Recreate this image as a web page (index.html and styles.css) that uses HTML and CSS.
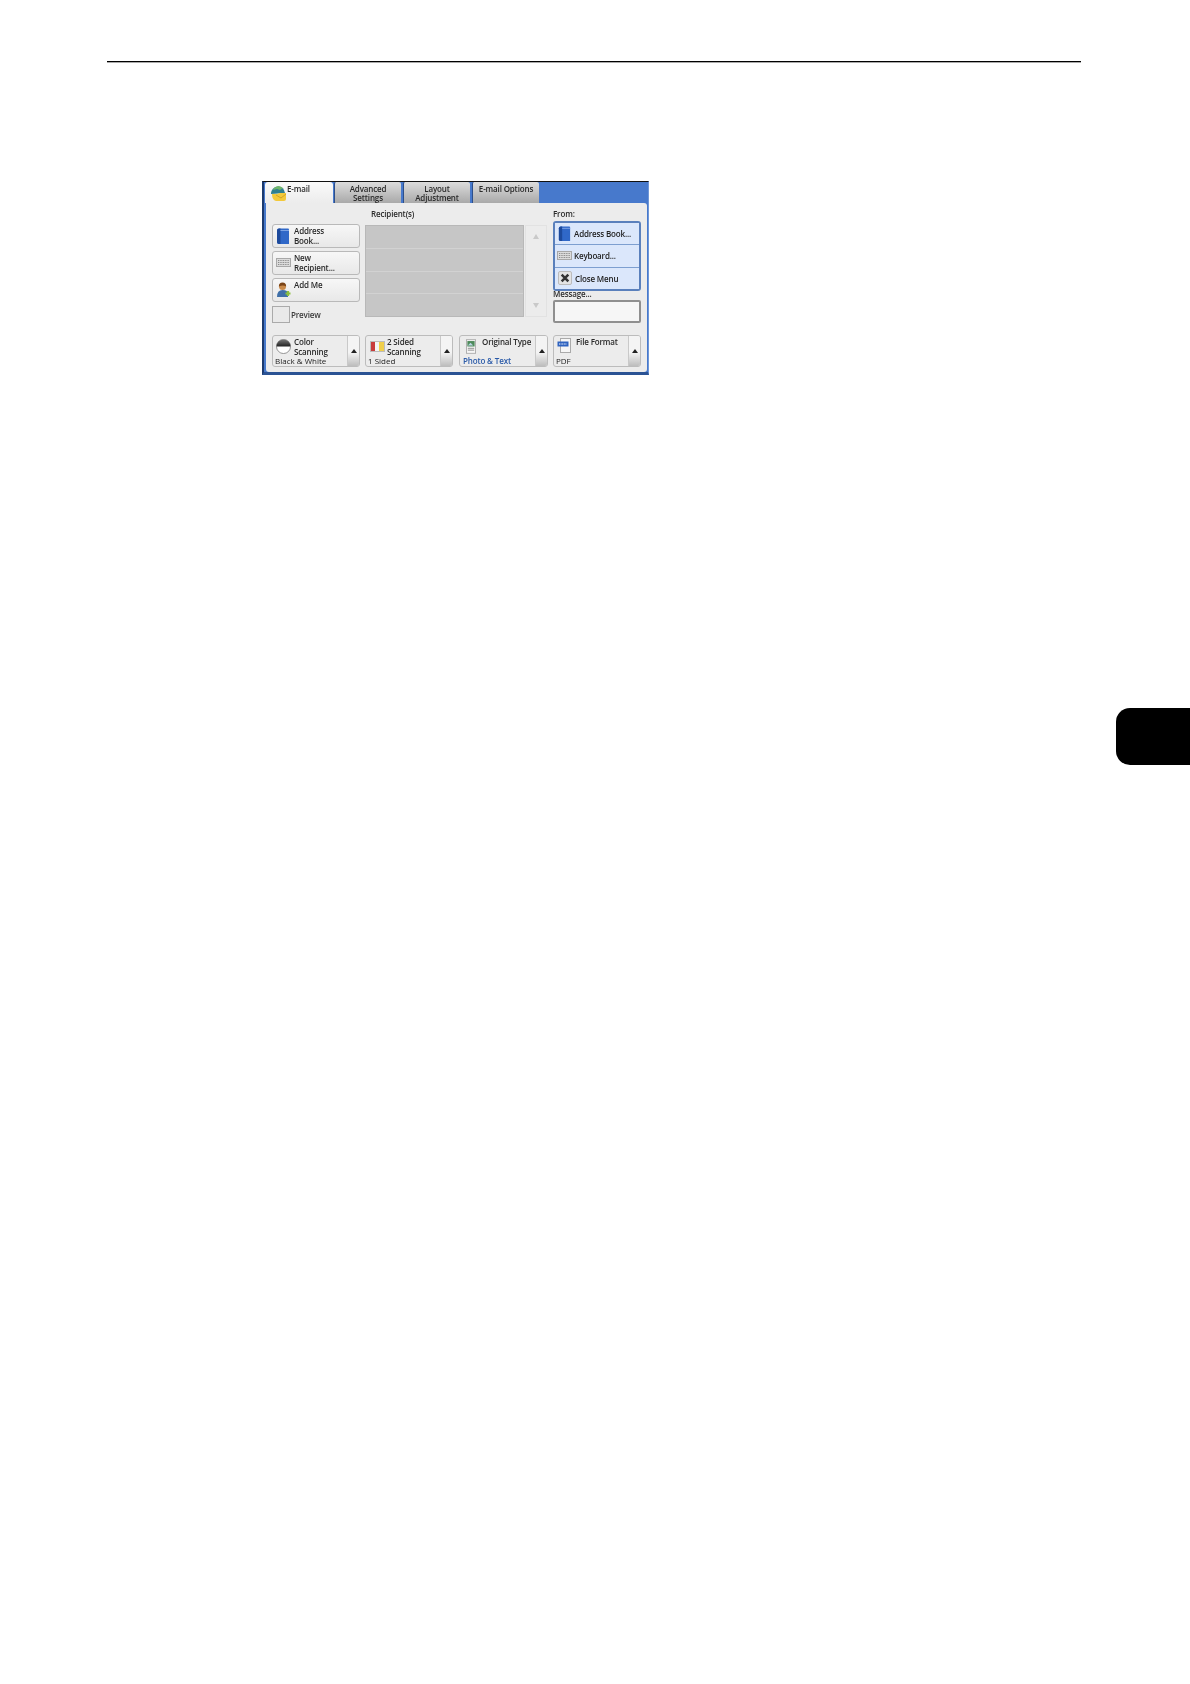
FILE: index.html
```html
<!DOCTYPE html>
<html lang="en">
<head>
<meta charset="utf-8">
<title>E-mail</title>
<link rel="stylesheet" href="styles.css">
</head>
<body>
<div class="rule"></div>
<main class="screen">
  <nav class="tabs">
    <div class="tab tab-active">
      <svg class="tab-icon" viewBox="0 0 15 15"><path d="M0 8a7 7 0 0 1 14-1z" fill="#2f7f8f"/><path d="M2 4a6 6 0 0 1 10-2L9 4 6 3z" fill="#6fb56a"/><path d="M1 8h5l3-1h6v6a2 2 0 0 1-2 2H5Q1 14 1 8z" fill="#f3c93b"/><path d="M5 9l5 3 5-4" fill="none" stroke="#c99a1f" stroke-width=".8"/></svg>
      <span>E-mail</span>
    </div>
    <div class="tab tab-idle">Advanced<br>Settings</div>
    <div class="tab tab-idle">Layout<br>Adjustment</div>
    <div class="tab tab-idle">E-mail Options</div>
  </nav>
  <section class="panel">
    <div class="upper">
      <div class="col-left">
        <button class="btn">
          <svg class="btn-icon" viewBox="0 0 12 16"><path d="M0 2.500Q0 .5 2 .5h9q1 0 1 1V16H2q-2 0-2-2z" fill="#3068c8"/><path d="M0 2.500Q0 .5 2 .5h1.500V16H2q-2 0-2-2z" fill="#1d4a9c"/><path d="M3.500 2.500H12" stroke="#7ea4e4"/></svg>
          <span>Address<br>Book...</span>
        </button>
        <button class="btn">
          <svg class="btn-icon btn-icon-wide" viewBox="0 0 15 9"><rect x=".5" y=".5" width="14" height="8" fill="#dcdcdc" stroke="#a8a8a8"/><path d="M2 2.500h11M2 4.500h11M2 6.500h11" stroke="#8a8a8a" stroke-dasharray="1 .7"/></svg>
          <span>New<br>Recipient...</span>
        </button>
        <button class="btn">
          <svg class="btn-icon btn-icon-person" viewBox="0 0 15 15"><circle cx="6.500" cy="4.500" r="3.500" fill="#c98a4a"/><path d="M2.800 4.500Q3 .5 6.500.5t3.700 4Q7 2.500 2.800 4.500z" fill="#7a4418"/><path d="M1 15q0-7 5.500-7T12 12v3z" fill="#3f6fa8"/><path d="M9.500 11.500h5M12 9v5" stroke="#8cc03f" stroke-width="2.200"/></svg>
          <span>Add Me</span>
        </button>
        <label class="check"><span class="box"></span><span>Preview</span></label>
      </div>
      <div class="col-mid">
        <div class="heading">Recipient(s)</div>
        <div class="list-wrap">
          <div class="list">
            <div class="list-row"></div>
            <div class="list-row"></div>
            <div class="list-row"></div>
            <div class="list-row"></div>
          </div>
          <div class="scroll">
            <div class="scroll-cell"><span class="tri-up"></span></div>
            <div class="scroll-cell scroll-cell-low"><span class="tri-down"></span></div>
          </div>
        </div>
      </div>
      <div class="col-right">
        <div class="from">From:</div>
        <div class="menu">
          <div class="menu-item">
            <svg class="menu-icon" viewBox="0 0 12 16"><path d="M0 2.500Q0 .5 2 .5h9q1 0 1 1V16H2q-2 0-2-2z" fill="#3068c8"/><path d="M0 2.500Q0 .5 2 .5h1.500V16H2q-2 0-2-2z" fill="#1d4a9c"/><path d="M3.500 2.500H12" stroke="#7ea4e4"/></svg>
            <span>Address Book...</span>
          </div>
          <div class="menu-item">
            <svg class="menu-icon menu-icon-wide" viewBox="0 0 15 9"><rect x=".5" y=".5" width="14" height="8" fill="#dcdcdc" stroke="#a8a8a8"/><path d="M2 2.500h11M2 4.500h11M2 6.500h11" stroke="#8a8a8a" stroke-dasharray="1 .7"/></svg>
            <span>Keyboard...</span>
          </div>
          <div class="menu-item">
            <span class="close-chip"><svg viewBox="0 0 12 12"><path d="M2 2l8 8M10 2l-8 8" stroke="#333" stroke-width="3"/></svg></span>
            <span>Close Menu</span>
          </div>
        </div>
        <div class="message">Message...</div>
        <div class="input"></div>
      </div>
    </div>
    <div class="lower">
      <div class="feature feat-a">
        <div class="feat-body">
          <svg class="feat-icon" viewBox="0 0 16 16"><defs><linearGradient id="dome" x1="0" y1="0" x2="0" y2="1"><stop offset="0" stop-color="#777"/><stop offset="1" stop-color="#222"/></linearGradient></defs><circle cx="8" cy="8" r="7.500" fill="#fff" stroke="#777" stroke-width=".8"/><path d="M.5 8a7.500 7.500 0 0 1 15 0z" fill="url(#dome)"/></svg>
          <div class="feat-title">Color<br>Scanning</div>
          <div class="feat-value">Black &amp; White</div>
        </div>
        <div class="feat-arrow"><span class="arrow"></span></div>
      </div>
      <div class="feature feat-b">
        <div class="feat-body">
          <svg class="feat-icon feat-icon-wide" viewBox="0 0 15 11"><rect x=".5" y=".5" width="14" height="10" fill="#eee" stroke="#bbb"/><rect x="1" y="1" width="4" height="9" fill="#c83c3c"/><rect x="5" y="1" width="4" height="9" fill="#f4f4f4"/><rect x="9" y="1" width="5" height="9" fill="#f0cf4a"/></svg>
          <div class="feat-title">2 Sided<br>Scanning</div>
          <div class="feat-value">1 Sided</div>
        </div>
        <div class="feat-arrow"><span class="arrow"></span></div>
      </div>
      <div class="feature feat-c">
        <div class="feat-body">
          <svg class="feat-icon feat-icon-doc" viewBox="0 0 11 16"><rect x=".5" y=".5" width="10" height="15" fill="#f6f6f6" stroke="#aaa"/><rect x="1.500" y="2" width="8" height="6" fill="#4d8a5a"/><path d="M2 7l3-3 3 3z" fill="#b9d3e6"/><path d="M2 10h7M2 12h7" stroke="#888"/></svg>
          <div class="feat-title feat-title-far">Original Type</div>
          <div class="feat-value feat-value-blue">Photo &amp; Text</div>
        </div>
        <div class="feat-arrow"><span class="arrow"></span></div>
      </div>
      <div class="feature feat-d">
        <div class="feat-body">
          <svg class="feat-icon feat-icon-file" viewBox="0 0 14 15"><rect x="3.500" y=".5" width="10" height="14" fill="#f6f6f6" stroke="#aaa"/><rect x=".5" y="3.500" width="11" height="5" fill="#2f63c0"/><path d="M2 6h8" stroke="#fff" stroke-dasharray="1 .6"/></svg>
          <div class="feat-title feat-title-far">File Format</div>
          <div class="feat-value">PDF</div>
        </div>
        <div class="feat-arrow"><span class="arrow"></span></div>
      </div>
    </div>
  </section>
</main>
<div class="chapter-tab"></div>
</body>
</html>
```
FILE: styles.css
```css
* { box-sizing: border-box; }
html, body { margin: 0; background: #fff; }
body {
  position: relative;
  width: 1190px;
  height: 1684px;
  overflow: hidden;
  padding-top: 61px;
  font-family: "Open Sans", "Noto Sans", sans-serif;
  font-size: 8px;
  letter-spacing: -.15px;
  line-height: 9.5px;
  color: #222;
}
.rule { height: 2px; margin: 0 109px 0 107px; background: #000; border-bottom: 1px solid #aaa; }
.chapter-tab {
  position: absolute;
  left: 1116px;
  top: 708px;
  width: 74px;
  height: 57px;
  background: #000;
  border-radius: 14px 0 0 14px;
}
.screen {
  width: 387px;
  height: 194px;
  margin: 118px 0 0 262px;
  background: #4779cc;
  border-top: 1px solid #111;
  border-left: 2px solid #1c3a6e;
  border-bottom: 3px solid #2b5394;
  border-right: 1px solid #6f97d8;
  display: flex;
  flex-direction: column;
  filter: blur(.35px);
}
.tabs { display: flex; height: 21px; gap: 2px; padding-left: 1px; }
.tab { width: 67px; text-align: center; font-weight: 600; color: #2a2a2a; line-height: 9px; }
.tab-active {
  width: 68px;
  margin-right: -1px;
  background: linear-gradient(#fafafa, #ececec);
  display: flex;
  align-items: flex-start;
  text-align: left;
  padding: 2px 0 0 6px;
  border-radius: 3px 3px 0 0;
}
.tab-icon { width: 15px; height: 15px; margin: 2px 1px 0 0; flex: none; }
.tab-idle {
  background: linear-gradient(#dcdcdc, #a9a9a9);
  border-left: 1px solid #2d4f8a;
  padding-top: 2px;
  border-radius: 2px 2px 0 0;
}
.panel {
  flex: none;
  height: 169px;
  margin: 0 1px 0 2px;
  background: #ececec;
  border-radius: 0 3px 3px 3px;
  padding: 0 6px;
}
.upper { display: grid; grid-template-columns: 88px 181px 88px; column-gap: 6px; height: 132px; }
.col-left { padding-top: 21px; display: flex; flex-direction: column; gap: 3px; }
.btn {
  height: 24px;
  width: 88px;
  padding: 1px 2px 1px 3px;
  display: flex;
  align-items: flex-start;
  font: inherit;
  letter-spacing: inherit;
  font-weight: 600;
  text-align: left;
  color: #2a2a2a;
  background: linear-gradient(#f7f7f7, #e8e8e8);
  border: 1px solid #b9b9b9;
  border-radius: 3px;
}
.btn-icon { width: 12px; height: 16px; margin: 2px 5px 0 1px; flex: none; }
.btn-icon-wide { width: 15px; height: 9px; margin: 5px 3px 0 0; }
.btn-icon-person { width: 15px; height: 15px; margin: 2px 3px 0 0; }
.check { display: flex; align-items: center; gap: 1px; margin-top: 1px; font-weight: 600; color: #3a3a3a; }
.box { width: 18px; height: 17px; border: 1px solid #aaa; background: #e9e9e9; }
.col-mid { display: flex; flex-direction: column; }
.heading { height: 22px; padding: 6px 0 0 5px; font-weight: 600; color: #2a2a2a; }
.list-wrap { display: flex; gap: 1px; height: 92px; margin-left: -1px; }
.list { width: 159px; background: #c6c6c6; display: flex; flex-direction: column; border: 1px solid #b8b8b8; }
.list-row { flex: 1; border-bottom: 1px solid #d2d2d2; }
.list-row:last-child { border-bottom: 0; }
.scroll { width: 22px; display: flex; flex-direction: column; border: 1px solid #e2e2e2; }
.scroll-cell { flex: 1; display: flex; align-items: center; justify-content: center; padding: 0 0 24px; }
.scroll-cell-low { padding: 24px 0 0; }
.tri-up { border: 3px solid transparent; border-top: 0; border-bottom: 5px solid #c9c9c9; }
.tri-down { border: 3px solid transparent; border-bottom: 0; border-top: 5px solid #c9c9c9; }
.col-right { display: flex; flex-direction: column; }
.from { height: 18px; padding: 6px 0 0 0; font-weight: 600; color: #2a2a2a; }
.menu {
  height: 70px;
  background: #7d9fd0;
  border: 2px solid #5a80bc;
  border-radius: 3px;
  display: flex;
  flex-direction: column;
  gap: 1px;
}
.menu-item {
  flex: 1;
  display: flex;
  align-items: center;
  gap: 3px;
  padding: 0 0 0 2px;
  background: #dbe7fb;
  color: #222;
  font-weight: 600;
}
.menu-icon { width: 13px; height: 15px; margin-left: 1px; flex: none; }
.menu-icon-wide { width: 15px; height: 9px; margin: 0 -1px 0 0; }
.close-chip {
  width: 14px;
  height: 14px;
  margin-left: 1px;
  padding: 1px;
  background: #e3e3e3;
  border: 1px solid #bbb;
  border-radius: 2px;
  flex: none;
}
.close-chip svg { display: block; width: 10px; height: 10px; }
.message { height: 9px; font-weight: 600; line-height: 6px; color: #2a2a2a; }
.input { height: 23px; background: #f6f6f6; border: 2px solid #8f8f8f; border-radius: 2px; }
.lower { display: flex; height: 32px; gap: 6px; }
.feature {
  display: flex;
  background: #ececec;
  border: 1px solid #bcbcbc;
  border-radius: 3px;
  overflow: hidden;
}
.feat-a { width: 88px; }
.feat-b { width: 88px; margin-left: -1px; }
.feat-c { width: 89px; margin-right: -1px; }
.feat-d { width: 88px; }
.feat-body {
  flex: 1;
  display: grid;
  grid-template-columns: 18px 1fr;
  grid-template-rows: 19px 9px;
  padding: 1px 0 0 3px;
  font-weight: 600;
  color: #2a2a2a;
}
.feat-icon { width: 15px; height: 15px; margin-top: 2px; }
.feat-icon-wide { height: 11px; margin: 4px 0 0 1px; }
.feat-icon-doc { width: 10px; height: 15px; margin: 2px 0 0 3px; }
.feat-icon-file { width: 14px; height: 15px; margin: 1px 0 0 0; }
.feat-title-far { padding-left: 1px; white-space: nowrap; }
.feat-value { grid-column: 1 / 3; margin-left: -1px; font-weight: 400; letter-spacing: 0; color: #222; }
.feat-value-blue { color: #2a5aa8; font-weight: 600; margin-left: 0; letter-spacing: -.15px; }
.feat-arrow {
  width: 12px;
  background: linear-gradient(#f4f4f4 55%, #bdbdbd);
  border-left: 1px solid #c9c9c9;
  display: flex;
  align-items: center;
  justify-content: center;
}
.arrow { border: 3px solid transparent; border-top: 0; border-bottom: 4px solid #222; }
```
